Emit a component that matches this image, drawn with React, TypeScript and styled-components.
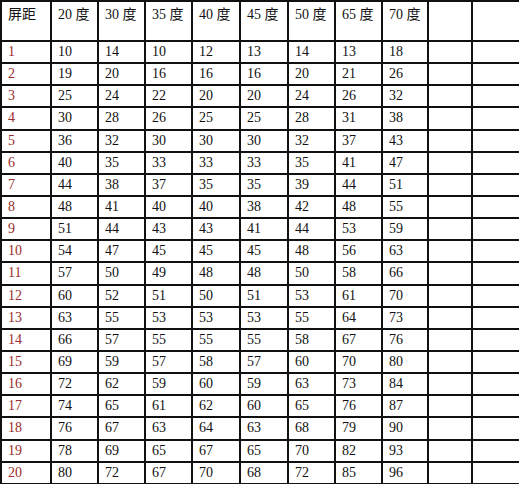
import React from 'react';
import styled, { createGlobalStyle } from 'styled-components';

const GlobalStyle = createGlobalStyle`
    html, body {
        margin: 0;
        padding: 0;
        background: #ffffff;
    }
`

const StyledTable = styled.table`
    border-collapse: collapse;
    table-layout: fixed;
    width: 519px;
    font-family: "Liberation Serif", "Noto Sans CJK SC", serif;
    font-size: 14px;
    color: #111;
`

const StyledHeadRow = styled.tr`
    height: 40px;
`

const StyledRow = styled.tr`
    height: 22.15px;
`

const StyledHeadCell = styled.th`
    border: 2px solid #111;
    padding: 4px 0 0 6px;
    text-align: left;
    vertical-align: top;
    font-weight: normal;
    line-height: 18px;
`

const StyledCell = styled.td<{ $index?: boolean }>`
    border: 2px solid #111;
    padding: 0 0 0 6px;
    text-align: left;
    vertical-align: middle;
    line-height: 16px;
    color: ${props => props.$index ? '#9b2c2c' : '#111'};
`

const colWidths = [50, 47, 47, 47, 48, 48, 47, 47, 46, 44, 48]

const headers = ['屏距', '20 度', '30 度', '35 度', '40 度', '45 度', '50 度', '65 度', '70 度', '', '']

const rows: number[][] = [
    [10, 14, 10, 12, 13, 14, 13, 18],
    [19, 20, 16, 16, 16, 20, 21, 26],
    [25, 24, 22, 20, 20, 24, 26, 32],
    [30, 28, 26, 25, 25, 28, 31, 38],
    [36, 32, 30, 30, 30, 32, 37, 43],
    [40, 35, 33, 33, 33, 35, 41, 47],
    [44, 38, 37, 35, 35, 39, 44, 51],
    [48, 41, 40, 40, 38, 42, 48, 55],
    [51, 44, 43, 43, 41, 44, 53, 59],
    [54, 47, 45, 45, 45, 48, 56, 63],
    [57, 50, 49, 48, 48, 50, 58, 66],
    [60, 52, 51, 50, 51, 53, 61, 70],
    [63, 55, 53, 53, 53, 55, 64, 73],
    [66, 57, 55, 55, 55, 58, 67, 76],
    [69, 59, 57, 58, 57, 60, 70, 80],
    [72, 62, 59, 60, 59, 63, 73, 84],
    [74, 65, 61, 62, 60, 65, 76, 87],
    [76, 67, 63, 64, 63, 68, 79, 90],
    [78, 69, 65, 67, 65, 70, 82, 93],
    [80, 72, 67, 70, 68, 72, 85, 96],
]

const App = () => {
    return (
        <>
            <GlobalStyle />
            <StyledTable>
                <colgroup>
                    {colWidths.map((w, i) => <col key={i} style={{ width: w }} />)}
                </colgroup>
                <thead>
                    <StyledHeadRow>
                        {headers.map((h, i) => <StyledHeadCell key={i}>{h}</StyledHeadCell>)}
                    </StyledHeadRow>
                </thead>
                <tbody>
                    {rows.map((row, i) => (
                        <StyledRow key={i}>
                            <StyledCell $index>{i + 1}</StyledCell>
                            {row.map((v, j) => <StyledCell key={j}>{v}</StyledCell>)}
                            <StyledCell />
                            <StyledCell />
                        </StyledRow>
                    ))}
                </tbody>
            </StyledTable>
        </>
    );
};

export default App;
